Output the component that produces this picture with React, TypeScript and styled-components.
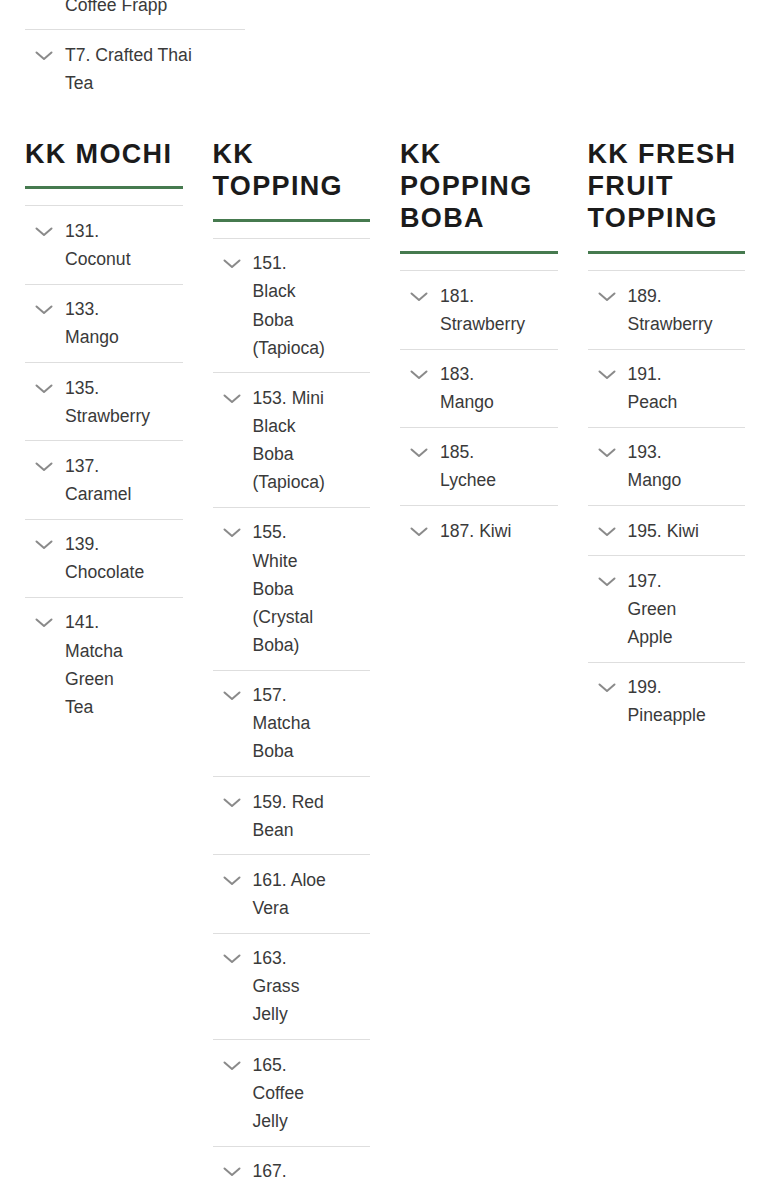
import React, { FC } from "react";
import styled, { createGlobalStyle } from "styled-components";

type MenuSection = {
  title: string;
  items: string[];
};

const previousColumns: string[][] = [
  ["T6. Brown Sugar Coffee Frapp", "T7. Crafted Thai Tea"],
  [],
  [],
];

const sections: MenuSection[] = [
  {
    title: "KK MOCHI",
    items: [
      "131. Coconut",
      "133. Mango",
      "135. Strawberry",
      "137. Caramel",
      "139. Chocolate",
      "141. Matcha Green Tea",
    ],
  },
  {
    title: "KK TOPPING",
    items: [
      "151. Black Boba (Tapioca)",
      "153. Mini Black Boba (Tapioca)",
      "155. White Boba (Crystal Boba)",
      "157. Matcha Boba",
      "159. Red Bean",
      "161. Aloe Vera",
      "163. Grass Jelly",
      "165. Coffee Jelly",
      "167. Pudding",
    ],
  },
  {
    title: "KK POPPING BOBA",
    items: ["181. Strawberry", "183. Mango", "185. Lychee", "187. Kiwi"],
  },
  {
    title: "KK FRESH FRUIT TOPPING",
    items: [
      "189. Strawberry",
      "191. Peach",
      "193. Mango",
      "195. Kiwi",
      "197. Green Apple",
      "199. Pineapple",
    ],
  },
];

const Chevron: FC = () => (
  <ChevronIcon viewBox="0 0 18 10" aria-hidden>
    <polyline
      points="1.5,1.5 9,8 16.5,1.5"
      fill="none"
      stroke="currentColor"
      strokeWidth="2"
      strokeLinecap="round"
      strokeLinejoin="round"
    />
  </ChevronIcon>
);

const ItemList: FC<{ items: string[] }> = ({ items }) => (
  <List>
    {items.map((item) => (
      <Item key={item}>
        <Chevron />
        <ItemTitle>{item}</ItemTitle>
      </Item>
    ))}
  </List>
);

const App: FC = () => {
  return (
    <>
      <GlobalStyle />
      <Page>
        <Section columns={3}>
          {previousColumns.map((items, i) => (
            <Column key={i}>
              <ItemList items={items} />
            </Column>
          ))}
        </Section>
        <Section columns={4}>
          {sections.map((section) => (
            <Column key={section.title}>
              <Heading>{section.title}</Heading>
              <ItemList items={section.items} />
            </Column>
          ))}
        </Section>
      </Page>
    </>
  );
};

const GlobalStyle = createGlobalStyle`
  * {
    box-sizing: border-box;
  }

  body {
    margin: 0;
    background: #ffffff;
    font-family: "Liberation Sans", Arial, sans-serif;
    overflow: hidden;
  }
`;

const Page = styled.main`
  display: flex;
  flex-direction: column;
  gap: 30px;
  padding: 0 25px;
  margin-top: -49px;
`;

const Section = styled.section<{ columns: number }>`
  display: grid;
  grid-template-columns: repeat(${({ columns }) => columns}, minmax(0, 1fr));
  column-gap: 30px;
  align-items: start;
`;

const Column = styled.div`
  display: flex;
  flex-direction: column;
  min-width: 0;
`;

const Heading = styled.h2`
  margin: 0 0 16px;
  padding-bottom: 16.5px;
  border-bottom: 3px solid #467a4f;
  font-size: 27px;
  line-height: 1.2;
  font-weight: 700;
  letter-spacing: 1.35px;
  color: #1b1b1b;
`;

const List = styled.ul`
  margin: 0;
  padding: 0;
  list-style: none;
`;

const Item = styled.li`
  display: flex;
  align-items: flex-start;
  padding: 10.5px 40px 10.5px 10px;
  border-top: 1px solid #dedede;
`;

const ChevronIcon = styled.svg`
  flex: none;
  width: 18px;
  height: 10px;
  margin: 10px 12px 0 0;
  color: #8a8a8a;
`;

const ItemTitle = styled.span`
  flex: 1;
  min-width: 0;
  font-size: 17.6px;
  line-height: 1.6;
  color: #3a3a3a;
`;

export default App;
